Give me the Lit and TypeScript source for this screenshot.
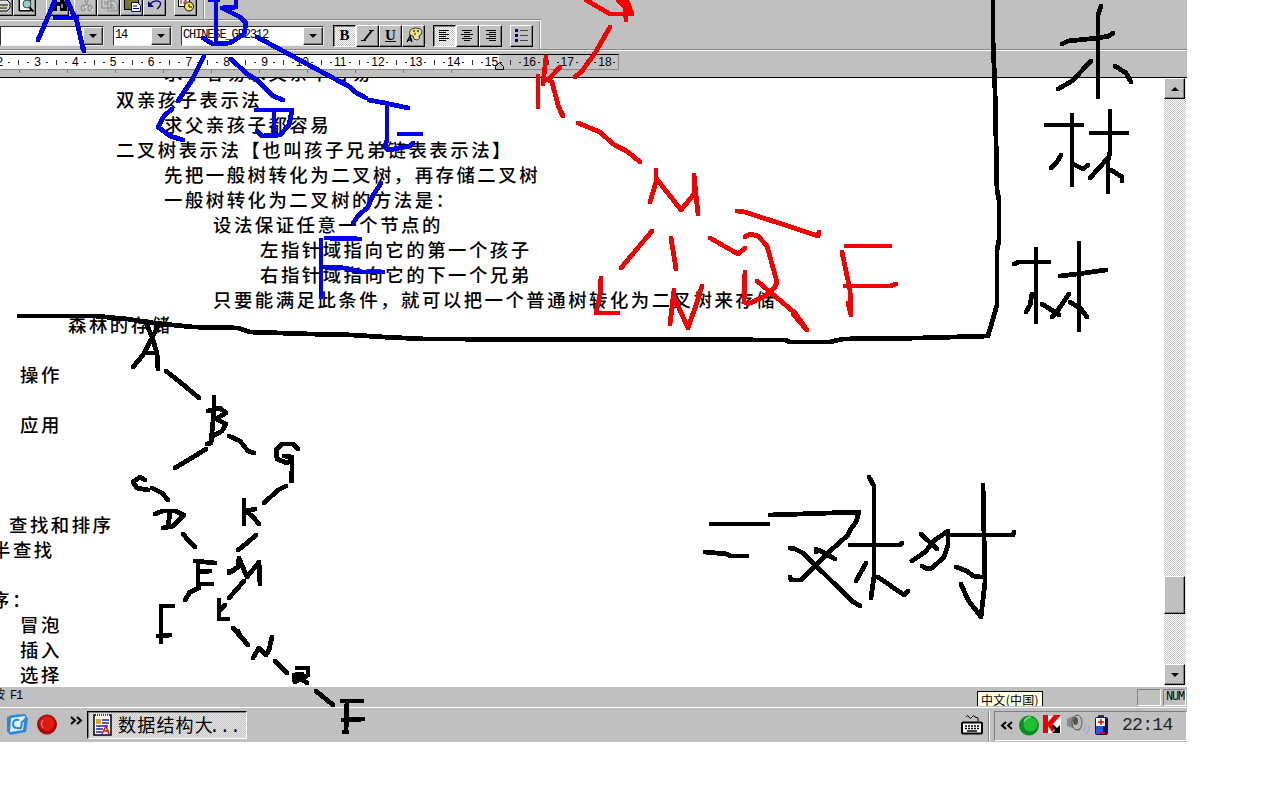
import { LitElement, html, css, svg } from "lit";
import { customElement } from "lit/decorators.js";

type Line = { x: number; t: string };

const LINES: Line[] = [
  { x: 164, t: "求子容易求父亲不容易" },
  { x: 116, t: "双亲孩子表示法" },
  { x: 164, t: "求父亲孩子都容易" },
  { x: 116, t: "二叉树表示法【也叫孩子兄弟链表表示法】" },
  { x: 164, t: "先把一般树转化为二叉树，再存储二叉树" },
  { x: 164, t: "一般树转化为二叉树的方法是：" },
  { x: 213, t: "设法保证任意一个节点的" },
  { x: 260, t: "左指针域指向它的第一个孩子" },
  { x: 260, t: "右指针域指向它的下一个兄弟" },
  { x: 213, t: "只要能满足此条件，就可以把一个普通树转化为二叉树来存储" },
  { x: 68, t: "森林的存储" },
  { x: 0, t: "" },
  { x: 20, t: "操作" },
  { x: 0, t: "" },
  { x: 20, t: "应用" },
  { x: 0, t: "" },
  { x: 0, t: "" },
  { x: 0, t: "" },
  { x: 9, t: "查找和排序" },
  { x: -8, t: "半查找" },
  { x: 0, t: "" },
  { x: -9, t: "序：" },
  { x: 20, t: "冒泡" },
  { x: 20, t: "插入" },
  { x: 20, t: "选择" },
];

const BLUE = [
  "55,0 47,19 38,40", "67,0 77,22 81,40 84,51", "82,46 84,51", "55,18 77,18",
  "216,0 216,42", "210,0 218,0", "236,0 236,7 222,8 240,17 246,23 244,34 230,43 213,44 203,38",
  "204,56 192,80 178,101", "231,59 247,74 257,80 273,96 283,100",
  "257,37 320,71 350,87 355,92 366,98", "369,100 385,103 408,108",
  "387,106 387,140 385,147 388,150 410,146 413,143", "399,134 421,134",
  "172,109 164,116 158,127 170,136 183,140",
  "256,110 292,110 289,125 280,135 262,136 257,131", "274,112 274,136",
  "381,183 372,197 368,207 358,216 353,223", "326,238 360,239", "321,240 321,297",
  "323,267 345,268 362,272 383,272",
];

const RED = [
  "586,0 610,14 632,14", "618,0 632,14 627,1", "625,0 626,20", "622,2 628,13",
  "610,27 595,53 582,71 575,77",
  "538,76 538,107", "546,57 543,84", "560,67 548,80 552,82 558,105 562,115", "562,113 563,116",
  "578,123 600,132 613,144 628,152 640,162",
  "650,202 656,182 656,170", "656,178 681,210 694,194 694,175 698,214", "694,178 696,195",
  "652,231 621,268", "671,238 676,269", "710,238 738,254 745,248",
  "737,211 745,212 800,230 818,236 819,232",
  "601,278 600,295 596,313 618,313", "670,324 674,290", "674,297 688,328 696,305 702,286",
  "745,237 750,234 758,236 767,246 777,282 775,287 765,296 748,304 744,302 745,272",
  "757,281 795,313 807,330", "793,314 805,328",
  "846,246 890,246", "842,252 850,290 851,315", "848,303 851,315", "845,286 890,286 896,284",
];

const BLACK = [
  "993,0 993,40 995,90 997,190 999,200 999,240 997,250 997,305 988,336 920,338 843,339 830,342 790,342 785,340 425,339 383,337 353,335 310,334 250,332 238,328 193,327 153,323 127,319 95,316 19,316",
  "1101,6 1098,15 1098,97", "1062,44 1068,41 1098,38 1109,36 1113,33", "1091,61 1072,81 1058,89", "1115,66 1126,73 1131,82",
  "1046,125 1082,125", "1072,115 1072,185", "1061,155 1057,162 1051,168", "1073,164 1083,169 1088,165",
  "1091,133 1127,133", "1110,111 1110,152 1108,160 1108,192", "1108,158 1090,178", "1111,170 1122,177 1122,181",
  "1014,264 1019,262 1049,262", "1036,249 1036,322", "1032,294 1030,305 1026,312", "1042,304 1058,314", "1069,294 1058,310 1052,317",
  "1060,276 1085,273 1106,270", "1079,243 1079,330", "1070,302 1081,309 1087,317", "1055,313 1059,315",
  "711,524 768,524", "705,552 727,554 730,556 747,556",
  "770,515 800,514 859,512 856,522 850,530 848,535 830,551 801,580 791,580 790,577",
  "790,548 795,549 803,553 852,601 860,606", "816,549 816,552 819,550 835,559",
  "869,477 874,486 874,577 871,598", "850,545 900,545 902,543", "866,563 856,581", "878,577 904,595 908,591",
  "921,534 937,549", "948,531 935,540 925,552 912,561", "948,531 948,545 944,557 932,568 927,569 922,566",
  "948,535 1013,535 1014,532", "983,485 984,535 985,582 981,617 968,600 961,584", "956,567 967,571 973,576 981,577",
];

const TREE = [
  "147,325 152,337 157,353 158,369", "133,367 143,355 152,338 159,324", "145,353 157,353",
  "166,371 180,382 199,398",
  "214,397 214,410 211,443 207,444", "208,411 220,408 226,413 216,419 226,424 222,431 213,436",
  "206,449 190,459 175,468", "229,436 240,441 248,451 254,453",
  "298,449 293,444 282,444 276,450 277,459 287,463 291,460", "284,456 292,457 292,470 291,481", "291,474 292,481",
  "286,486 278,490 264,503",
  "145,480 140,477 133,482 137,488 148,490", "152,488 162,493 168,500",
  "155,514 163,511 175,511 184,515 173,526 163,528", "170,513 168,527",
  "244,500 244,524", "255,509 246,511 253,517 259,524",
  "183,534 188,540 195,547", "256,535 247,543 238,550",
  "195,561 215,563", "198,562 198,584 212,584", "199,572 210,571",
  "229,573 238,567 239,558 247,577 259,562 260,584", "229,571 233,571",
  "199,588 190,592 185,600", "173,606 161,606 161,642", "158,636 170,635",
  "244,581 229,598", "219,600 219,619 228,619", "225,605 219,611",
  "233,628 248,645", "238,631 241,637 245,641",
  "253,658 259,648 266,655 269,650 272,637", "275,661 287,673",
  "297,668 308,668 308,675 295,682 294,675 302,674", "298,676 307,683",
  "316,691 333,705", "342,701 362,701", "347,702 346,730", "344,732 347,732", "343,720 363,719",
];

const poly = (pts: string) => svg`<polyline points=${pts}></polyline>`;

@customElement("ink-layer")
class InkLayer extends LitElement {
  static styles = css`
    :host { display: block; }
    svg { display: block; shape-rendering: crispEdges; }
    g { fill: none; stroke-linecap: round; stroke-linejoin: round; stroke-width: 4.8; }
    .blue { stroke: #0000ea; }
    .red { stroke: #f40000; }
    .black { stroke: #000; }
  `;
  render() {
    return html`<svg width="1280" height="800" viewBox="0 0 1280 800">
      <g class="black">${BLACK.map(poly)}${TREE.map(poly)}</g>
      <g class="blue">${BLUE.map(poly)}</g>
      <g class="red">${RED.map(poly)}</g>
    </svg>`;
  }
}

const preview = svg`<path d="M5 -4v15h12" fill="none" stroke="#000"/><rect x="5.500" y="-4" width="11" height="14.500" fill="#fff" stroke="#000"/><circle cx="13" cy="4" r="4" fill="#9cc" stroke="#444"/><path d="M15.500 7.500l4 4" stroke="#000" stroke-width="2"/>`;
const printer = svg`<path d="M-4 0h11l3 3v5l-3 3h-11z" fill="#ddd" stroke="#000"/><path d="M-3 5h11M-3 8h10" stroke="#000"/><rect x="2" y="6" width="3" height="1.500" fill="#cc0"/>`;
const binoc = svg`<path d="M7 -2h3v4h3v-4h3l4 8v5h-7v-5h-3v5h-7v-5z" fill="#000"/><path d="M6 4v4M15 4v4" stroke="#fff"/>`;
const cut = svg`<path d="M8 -3l6 10M15 -3l-6 10" stroke="#888" fill="none"/><ellipse cx="8" cy="8" rx="2" ry="3" fill="none" stroke="#888"/><ellipse cx="15" cy="8" rx="2" ry="3" fill="none" stroke="#888"/><path d="M10 8l1-2M17 11l1-2" stroke="#fff"/>`;
const copy = svg`<path d="M4 -3h6l3 3v8h-9zM10 1h6l3 3v7h-9z" fill="#ccc" stroke="#888"/><path d="M6 2h4M6 4h4M12 5h4M12 7h5M12 9h5" stroke="#888"/>`;
const paste = svg`<rect x="3.500" y="-4" width="14" height="13.500" fill="#77762a" stroke="#000"/><path d="M10.500 2.500h6l3 3v6h-9z" fill="#fff" stroke="#000080"/><path d="M12 6h4M12 8.500h6" stroke="#000080"/>`;
const undo = svg`<path d="M6 4q5-5 10-2q2 3-3 7" fill="none" stroke="#000080" stroke-width="1.300"/><path d="M4 1v6h6z" fill="#000080"/>`;
const date = svg`<rect x="3.500" y="-3.500" width="11" height="10" fill="#fff" stroke="#000"/><path d="M6 0v4M9 0h2v2h-2v2h3" stroke="#a00" fill="none"/><circle cx="14" cy="6.500" r="4.500" fill="#ffe860" stroke="#000"/><path d="M14 4v3h3" fill="none" stroke="#000"/>`;
const align = (w: number[], a: number) =>
  svg`${w.map((n, i) => svg`<path d=${`M${a === 0 ? 5 : a === 1 ? 10 - n / 2 : 16 - n} ${4.5 + i * 2}h${n}`} stroke="#000"/>`)}`;
const italic = svg`<path d="M15 4.500l-8 10" stroke="#000" stroke-width="2"/><path d="M12 4.500h5M4 14.500h5" stroke="#000"/>`;
const palette = svg`<path d="M7 9q-2-6 5-7q7 0 7 4q0 3-3 4q2 3-2 4q-4 0-4-4z" fill="#eee79a" stroke="#333"/><circle cx="11" cy="5" r="1.200" fill="#a50"/><circle cx="15" cy="5" r="1.200" fill="#555"/><circle cx="12" cy="8" r="1.200" fill="#880"/><path d="M4 16l3-6l2 6M5 14h4" fill="none" stroke="#000" stroke-width="1.300"/>`;
const bullets = svg`<path d="M4 3h3v3h-3zM4 8h3v3h-3zM4 13h3v3h-3z" fill="#000080"/><path d="M9 4.500h8M9 9.500h8M9 14.500h8" stroke="#444"/>`;

const btn = (icon: unknown, cls = "") =>
  html`<div class="btn ${cls}"><svg width="22" height="20" viewBox="0 0 22 20">${icon}</svg></div>`;
const arrow = (up = false) =>
  html`<svg width="8" height="4" viewBox="0 0 8 4"><path d=${up ? "M0 4h8L4 0z" : "M0 0h8L4 4z"} fill="#000"/></svg>`;

@customElement("app-root")
class AppRoot extends LitElement {
  static styles = css`
    :host { display: block; position: relative; width: 1280px; height: 800px; overflow: hidden; background: #fff; color: #000;
      font-family: "Liberation Sans", "Noto Sans CJK SC", sans-serif; }
    * { box-sizing: border-box; }
    .ink { position: absolute; left: 0; top: 0; }
    .window { width: 1187px; height: 742px; background: #c0c0c0; display: flex; flex-direction: column; overflow: hidden; }
    .bar { width: 541px; display: flex; flex: none; border-bottom: 1px solid #888; }
    .bar.one { height: 20px; padding-bottom: 3px; overflow: hidden; }
    .bar.two { height: 29px; border: 0; border-top: 1px solid #fff; border-right: 1px solid #fff; box-shadow: inset -1px 0 #888; padding-top: 4px; align-items: flex-start; }
    .btn { width: 23px; height: 22px; flex: none; border: 1px solid; border-color: #fff #000 #000 #fff; box-shadow: inset -1px -1px #808080; overflow: hidden; }
    .btn svg { display: block; }
    .one .btn { height: 16px; border-top: 0; }
    .one .btn.half { width: 13px; border-left: 0; }
    .btn.on { border-color: #000 #fff #fff #000; box-shadow: inset 1px 1px #808080; background: repeating-conic-gradient(#fff 0 25%, #c8c8c8 0 50%) 0 0 / 2px 2px; }
    .glyph { font: bold 15px/19px "Liberation Serif", serif; text-align: center; }
    .u { text-decoration: underline; }
    .g9 { margin-left: 9px; } .g8 { margin-left: 8px; } .g4 { margin-left: 5px; } .g10 { margin-left: 10px; }
    .endline { width: 2px; height: 19px; margin-left: 6px; border-left: 1px solid #888; border-right: 1px solid #fff; }
    .combo { height: 20px; margin-top: 1px; flex: none; display: flex; justify-content: space-between; background: #fff; border: 1px solid; border-color: #333 #eee #eee #333; font: 12px/16px "Liberation Mono", monospace; letter-spacing: -1.13px; padding-left: 1px; }
    .drop { width: 20px; display: flex; align-items: center; justify-content: center; background: #c0c0c0; border: 1px solid; border-color: #fff #222 #222 #fff; box-shadow: inset -1px -1px #808080; }
    .c1 { width: 104px; } .c2 { width: 59px; } .c3 { width: 143px; }
    .rule-area { height: 29px; flex: none; border-top: 1px solid #888; border-bottom: 1px solid #000; box-shadow: inset 0 1px #fff; padding-top: 4px; }
    .rule { width: 619px; height: 16px; display: flex; overflow: hidden; border: 1px solid #888; border-left: 0; border-top-color: #000; background: linear-gradient(90deg, #fff 499px, #c4c4c4 499px); }
    .cells { display: flex; flex: none; margin-left: -5px; }
    .cell { width: 37.83px; display: grid; grid-template-columns: repeat(4, 9.45px); font-size: 12px; line-height: 14px; }
    .cell span { display: flex; justify-content: center; align-items: center; white-space: nowrap; }
    .cell i { width: 1px; height: 5px; background: #333; } .cell b { width: 2px; height: 1px; background: #222; }
    .ticks { height: 3px; width: 499px; display: flex; justify-content: flex-end; background: repeating-linear-gradient(90deg, transparent 0 19px, #777 19px 20px, transparent 20px 48px); }
    .marker { margin: -8px -5px 0 0; flex: none; }
    .doc { height: 608px; flex: none; display: flex; justify-content: space-between; background: #fff; }
    .page { overflow: hidden; flex: 1; font: 500 18.4px/25px "Noto Sans CJK SC", sans-serif; letter-spacing: 2.5px; white-space: nowrap; }
    .text { margin-top: -18px; }
    .ln { height: 25px; }
    .ln:first-child { height: 27px; }
    .scroll { width: 22px; margin-right: 1px; display: flex; flex-direction: column; background: repeating-conic-gradient(#fff 0 25%, #c4c4c4 0 50%) 0 0 / 2px 2px; }
    .sb { width: 21px; height: 21px; flex: none; display: flex; align-items: center; justify-content: center; background: #c0c0c0; border: 1px solid; border-color: #fff #000 #000 #fff; box-shadow: inset -1px -1px #808080; }
    .sb.thumb { height: 38px; margin-top: 477px; margin-bottom: 50px; }
    .status { height: 21px; flex: none; display: flex; border-top: 1px solid #fff; font: 12px/19px "Liberation Mono", "Noto Sans CJK SC", monospace; letter-spacing: -1.13px; }
    .help { width: 977px; overflow: hidden; white-space: nowrap; }
    .help span { margin-left: -7px; }
    .tip { width: 66px; height: 15px; margin-top: 4px; background: #ffffe1; border: 1px solid #000; border-bottom: 0; font: 12px/15px "Noto Sans CJK SC", sans-serif; letter-spacing: 0.3px; text-align: center; white-space: nowrap; overflow: hidden; }
    .cellbox { width: 24px; height: 17px; margin: 2px 2px 0 94px; border: 1px solid; border-color: #808080 #fff #fff #808080; }
    .num { width: 23px; margin: 2px 0 0; line-height: 14px; text-align: center; padding-left: 1px; }
    .task { height: 35px; flex: none; display: flex; border-top: 1px solid #fff; align-items: flex-start; padding-top: 3px; }
    .task svg { display: block; flex: none; }
    .app { width: 160px; height: 28px; flex: none; display: flex; align-items: center; border: 1px solid; border-color: #000 #fff #fff #000; box-shadow: inset 1px 1px #808080; background: repeating-conic-gradient(#e8e8e8 0 25%, #c4c4c4 0 50%) 0 0 / 2px 2px; padding-left: 4px; gap: 5px; white-space: nowrap; font: 18px/24px "Noto Sans CJK SC", sans-serif; letter-spacing: 1.2px; }
    .dots { font: 18px/24px "Liberation Mono", monospace; letter-spacing: -0.3px; margin-left: -5px; }
    .key { margin-left: 713px; }
    .sep { width: 2px; height: 30px; margin: 0 4px; border-left: 1px solid #808080; border-right: 1px solid #fff; }
    .tray { width: 193px; height: 30px; display: flex; align-items: center; border: 1px solid; border-color: #808080 #fff #fff #808080; }
    .clock { font: 18px/26px "Liberation Mono", monospace; letter-spacing: -0.7px; margin: -2px 0 0 11px; color: #222; }
  `;

  render() {
    const nums = Array.from({ length: 17 }, (_, i) => i + 2);
    return html`
      <div class="window">
        <div class="bar one">
          ${btn(printer, "half")}${btn(preview)}${btn(binoc, "g10")}${btn(cut, "g4")}${btn(copy)}${btn(paste)}${btn(undo)}${btn(date, "g8")}
          <div class="endline"></div>
        </div>
        <div class="bar two">
          <div class="combo c1"><span></span><div class="drop">${arrow()}</div></div>
          <div class="combo c2 g9"><span>14</span><div class="drop">${arrow()}</div></div>
          <div class="combo c3 g9"><span>CHINESE_GB2312</span><div class="drop">${arrow()}</div></div>
          <div class="btn on g9 glyph">B</div>${btn(italic)}<div class="btn glyph u">U</div>${btn(palette)}
          ${btn(align([10, 7, 10, 7, 10, 7], 0), "on g8")}${btn(align([10, 6, 12, 6, 10, 6], 1))}${btn(align([10, 7, 10, 7, 10, 7], 2))}
          ${btn(bullets, "g8")}
        </div>
        <div class="rule-area">
          <div class="rule"><div class="cells">
            ${nums.map((n) => html`<div class="cell"><span>${n}</span><span><b></b></span><span><i></i></span><span><b></b></span></div>`)}
          </div></div>
          <div class="ticks"><svg class="marker" width="9" height="8" viewBox="0 0 9 8"><path d="M.5 7.500v-3l4-4l4 4v3z" fill="#c0c0c0" stroke="#000"/></svg></div>
        </div>
        <div class="doc">
          <div class="page"><div class="text">
            ${LINES.map((l) => html`<div class="ln" style="margin-left:${l.x}px">${l.t}</div>`)}
          </div></div>
          <div class="scroll">
            <div class="sb">${arrow(true)}</div><div class="sb thumb"></div><div class="sb">${arrow()}</div>
          </div>
        </div>
        <div class="status">
          <div class="help"><span>按 F1</span></div>
          <div class="tip">中文(中国)</div>
          <div class="cellbox"></div><div class="cellbox num">NUM</div>
        </div>
        <div class="task">
          <svg width="68" height="28" viewBox="0 0 68 28">
            <path d="M7 6l5-2l13-1l3 5l-2 13l-16 3l-3-4z" fill="#2e86d8"/><path d="M11 7l14-2l-2 14l-13 2z" fill="#dcefff"/><path d="M19 9q-6-1-6 4q0 5 8 4l1-6l5-4" fill="none" stroke="#2e86d8" stroke-width="2"/>
            <circle cx="47" cy="13.500" r="10" fill="#a80808"/><circle cx="47" cy="12.500" r="7.500" fill="#e01818"/><path d="M43 9q-3 4 0 8" fill="none" stroke="#ff6050" stroke-width="1.500"/>
          </svg>
          <svg width="19" height="20" viewBox="0 0 19 20"><path d="M3 6l4 3.500l-4 3.500M9 6l4 3.500l-4 3.500" fill="none" stroke="#000" stroke-width="2"/></svg>
          <div class="app">
            <svg width="21" height="24" viewBox="0 0 21 24"><rect x="2" y="2" width="17" height="20" fill="#fff" stroke="#000" stroke-width="1.500"/><path d="M4 2h14" stroke="#fff" stroke-width="2" stroke-dasharray="1 1"/><path d="M10 7h7M10 10h7M4 13h12M4 16h7M4 19h6" stroke="#2020b0" stroke-width="1.500"/><rect x="4" y="6" width="5" height="5" fill="#d8a820"/><path d="M10 21l4-8l3 8M11 18h6" fill="none" stroke="#e01010" stroke-width="1.500"/></svg>
            <div>数据结构大<span class="dots">...</span></div>
          </div>
          <svg class="key" width="24" height="28" viewBox="0 0 24 28"><path d="M6 6q2-3 3 0t3 0t3 0l3 1v5" fill="none" stroke="#000"/><rect x="2" y="11.500" width="20" height="11" rx="1" fill="#fff" stroke="#000" stroke-width="2"/><path d="M5 15h15M5 17.500h15" stroke="#000" stroke-width="1.500" stroke-dasharray="2 1"/><path d="M7 20h10" stroke="#000" stroke-width="1.500"/></svg>
          <div class="sep"></div>
          <div class="tray">
            <svg width="116" height="28" viewBox="0 0 116 28">
              <path d="M11 10l-4 3.500l4 3.500M17 10l-4 3.500l4 3.500" fill="none" stroke="#000" stroke-width="2"/>
              <circle cx="34" cy="13.500" r="10" fill="#0b8a20"/><circle cx="35.500" cy="12.500" r="7" fill="#1cc030"/><path d="M29 10q2-5 7-5" stroke="#80e080" stroke-width="1.500" fill="none"/>
              <rect x="49" y="4" width="17" height="17" fill="#fff"/><path d="M48 3h5v7l6-7h7l-9 10l3 4l-3 3l-4-6v7h-5z" fill="#e80000"/><path d="M58 12l4 4l3-3v8h-8l3-3l-3-4z" fill="#000"/>
              <path d="M72 7l4-2l8-2q5 8 1 16l-7-3l-6-2z" fill="#888"/><ellipse cx="82" cy="10.500" rx="5" ry="7.500" fill="#bbb" stroke="#555"/><ellipse cx="80.500" cy="9" rx="2.500" ry="4" fill="#555"/><path d="M88 19q4-3 2-7M90 23q5-4 4-9" fill="none" stroke="#a4a4dc" stroke-width="1.500"/>
              <rect x="103" y="3" width="6" height="3" fill="#333"/><rect x="100" y="5" width="13" height="18" rx="2" fill="#101050"/><rect x="101" y="6" width="9" height="8" fill="#fff"/><path d="M106 7v6M103 10h6" stroke="#e00" stroke-width="1.500"/><rect x="101" y="14" width="7" height="8" fill="#2858f0"/><path d="M105 21h5" stroke="#e00" stroke-width="2"/>
            </svg>
            <div class="clock">22:14</div>
          </div>
        </div>
      </div>
      <ink-layer class="ink"></ink-layer>
    `;
  }
}
